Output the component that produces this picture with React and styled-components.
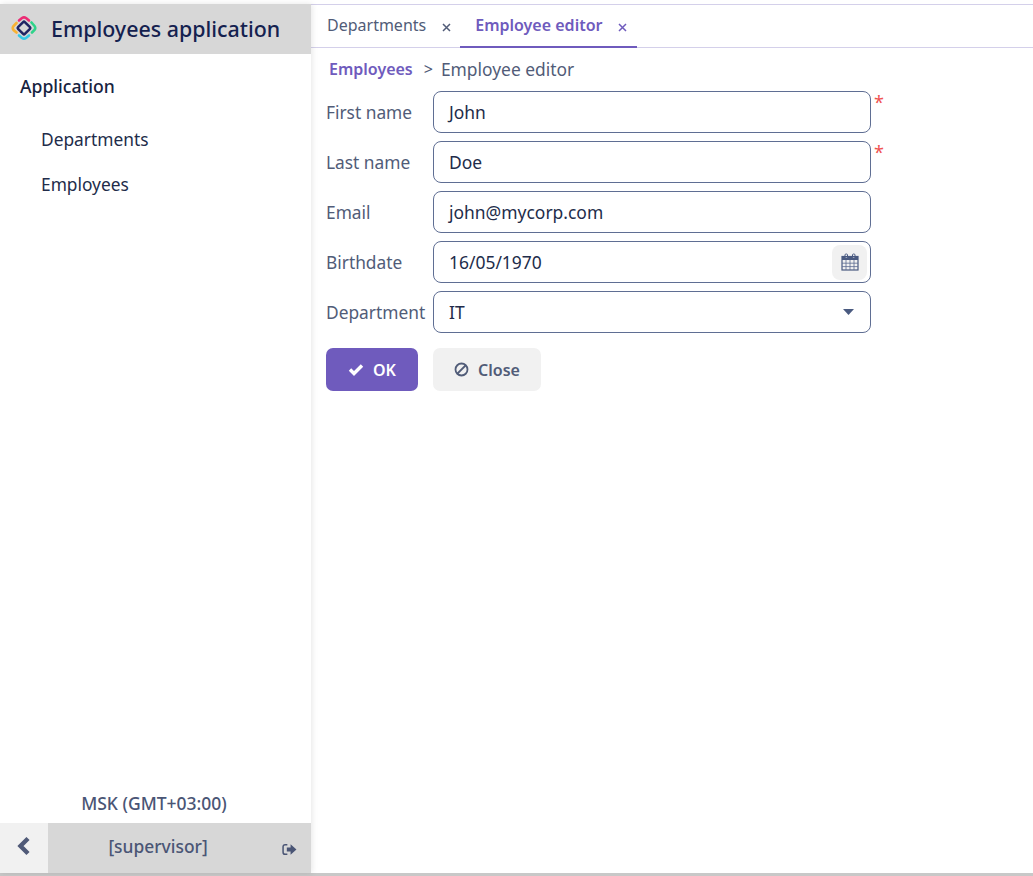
import React from "react"
import styled, { createGlobalStyle } from "styled-components"

const GlobalStyle = createGlobalStyle`
  html, body {
    margin: 0;
    padding: 0;
    background: #fff;
    font-family: "Noto Sans", sans-serif;
    overflow: hidden;
  }
`

const Page = styled.div`
  height: 876px;
  box-sizing: border-box;
  padding-top: 4px;
  display: flex;
  flex-direction: column;
`

const Frame = styled.div`
  flex: 1;
  display: flex;
  min-height: 0;
  border-bottom: 3px solid #c8c8c8;
`

const Sidebar = styled.aside`
  width: 311px;
  flex: none;
  display: flex;
  flex-direction: column;
  background: #fff;
  box-shadow: 1px 0 6px rgba(0, 0, 0, 0.1);
  z-index: 1;
`

const SideHeader = styled.div`
  height: 50px;
  box-sizing: border-box;
  padding: 0 0 2px 11px;
  background: #d7d7d7;
  display: flex;
  align-items: center;
  gap: 14px;
`

const AppTitle = styled.div`
  font-size: 21.4px;
  font-weight: 500;
  color: #14214f;
`

const MenuTitle = styled.div`
  margin: 19px 0 18px 20px;
  font-size: 17.6px;
  line-height: 26px;
  font-weight: 500;
  color: #17233f;
`

const MenuItem = styled.div`
  padding-left: 41px;
  height: 45px;
  line-height: 45px;
  font-size: 17.33px;
  color: #222c4a;
`

const Spacer = styled.div`
  flex: 1;
`

const Zone = styled.div`
  text-align: center;
  font-size: 17.5px;
  font-weight: 500;
  line-height: 24px;
  color: #4a5575;
  padding: 0 3px 8px 0;
`

const SideFooter = styled.div`
  display: flex;
  height: 50px;
`

const CollapseButton = styled.div`
  width: 48px;
  background: #f1f1f1;
  display: flex;
  align-items: flex-start;
  justify-content: center;
  padding-top: 13px;
  box-sizing: border-box;
`

const UserBar = styled.div`
  flex: 1;
  background: #d7d7d7;
  display: flex;
  align-items: flex-start;
`

const UserName = styled.div`
  flex: 1;
  text-align: center;
  font-size: 17.4px;
  font-weight: 500;
  line-height: 24px;
  padding-top: 11px;
  padding-right: 14px;
  color: #4a5575;
`

const LogoutIcon = styled.svg`
  margin: 20px 14px 0 0;
`

const Main = styled.main`
  flex: 1;
  min-width: 0;
  display: flex;
  flex-direction: column;
`

const TabBar = styled.div`
  height: 44px;
  box-sizing: border-box;
  display: flex;
  border-top: 1px solid #d4d0ea;
  border-bottom: 1px solid #d4d0ea;
  padding-left: 1px;
`

const Tab = styled.div`
  display: flex;
  align-items: flex-start;
  height: 43px;
  box-sizing: border-box;
  padding: 8px ${({ $active }) => ($active ? "10px" : "9px")} 0 15px;
  font-size: 16px;
  line-height: 24px;
  font-weight: ${({ $active }) => ($active ? 600 : 400)};
  color: ${({ $active }) => ($active ? "#6f5bbd" : "#515c78")};
  border-bottom: 2px solid ${({ $active }) => ($active ? "#6f5bbd" : "transparent")};
`

const TabClose = styled.svg`
  margin: 10px 0 0 16px;
`

const Content = styled.div`
  padding: 8px 15px 0 15px;
`

const Crumbs = styled.div`
  display: flex;
  align-items: center;
  height: 26px;
  padding-left: 3px;
  font-size: 17.4px;
  color: #515c78;
  margin-bottom: 9px;
`

const CrumbLink = styled.span`
  font-size: 16px;
  font-weight: 600;
  color: #6f5bbd;
`

const CrumbSep = styled.span`
  margin: 0 8px 0 11px;
  font-size: 16px;
`

const Row = styled.div`
  display: flex;
  align-items: center;
  height: 42px;
  margin-bottom: 8px;
`

const Label = styled.label`
  width: 107px;
  flex: none;
  font-size: 17.33px;
  color: #515c78;
`

const InputBox = styled.div`
  width: 438px;
  height: 42px;
  box-sizing: border-box;
  border: 1px solid #5f6e93;
  border-radius: 8px;
  display: flex;
  align-items: center;
  padding-left: 15px;
  font-size: 17.45px;
  color: #222c4a;
`

const Value = styled.span`
  flex: 1;
`

const Required = styled.span`
  align-self: flex-start;
  margin-left: 3px;
  color: #f0524f;
  font-size: 18px;
  line-height: 22px;
`

const DateButton = styled.div`
  width: 35px;
  height: 35px;
  margin-right: 3px;
  border-radius: 8px;
  background: #f1f1f1;
  display: flex;
  align-items: center;
  justify-content: center;
`

const Caret = styled.svg`
  margin-right: 16px;
`

const Buttons = styled.div`
  display: flex;
  margin-top: 15px;
  gap: 15px;
`

const Button = styled.div`
  height: 43px;
  width: ${({ $width }) => $width}px;
  box-sizing: border-box;
  border-radius: 7px;
  display: flex;
  align-items: center;
  justify-content: center;
  gap: 9px;
  font-size: 16px;
  font-weight: 600;
  background: ${({ $primary }) => ($primary ? "#6f5bbd" : "#f1f1f1")};
  color: ${({ $primary }) => ($primary ? "#fff" : "#515c78")};
`

const Logo = () => (
  <svg width="26" height="26" viewBox="0 0 26 26" fill="none" strokeWidth="2.6" strokeLinecap="round">
    <path d="M8 5.5 L11 3 Q13 1.6 15 3 L18 5.5" stroke="#ec2c74" />
    <path d="M20.5 7.5 L23.5 11 Q25 13 23.5 15 L21 17.5" stroke="#2fd38a" />
    <path d="M18 20.5 L15 23 Q13 24.4 11 23 L8 20.5" stroke="#32c9e6" />
    <path d="M5.5 17.5 L2.5 15 Q1 13 2.5 11 L5.5 8" stroke="#f9b233" />
    <rect x="8.2" y="8.2" width="9.6" height="9.6" rx="1.2" transform="rotate(45 13 13)" stroke="#1f2463" strokeWidth="2.5" />
  </svg>
)

const CloseX = () => (
  <TabClose width="9" height="9" viewBox="0 0 9 9">
    <path d="M1 1 L8 8 M8 1 L1 8" stroke="currentColor" strokeWidth="1.5" />
  </TabClose>
)

const Calendar = () => (
  <svg width="18" height="18" viewBox="0 0 18 18" fill="none">
    <path d="M1 3.5 H17 V7 H1 Z" fill="#4a5a80" />
    <rect x="4" y="1" width="2.5" height="4" rx="1" fill="#fff" stroke="#4a5a80" />
    <rect x="11.5" y="1" width="2.5" height="4" rx="1" fill="#fff" stroke="#4a5a80" />
    <rect x="1" y="3.5" width="16" height="13.5" stroke="#4a5a80" strokeWidth="1.2" />
    <path d="M1 10.2 H17 M1 13.6 H17 M5 7 V17 M9 7 V17 M13 7 V17" stroke="#5a6a90" strokeWidth="0.8" />
  </svg>
)

const fields = [
  { label: "First name", value: "John", required: true },
  { label: "Last name", value: "Doe", required: true },
  { label: "Email", value: "john@mycorp.com" },
]

export default function App() {
  return (
    <Page>
      <GlobalStyle />
      <Frame>
        <Sidebar>
          <SideHeader>
            <Logo />
            <AppTitle>Employees application</AppTitle>
          </SideHeader>
          <MenuTitle>Application</MenuTitle>
          <MenuItem>Departments</MenuItem>
          <MenuItem>Employees</MenuItem>
          <Spacer />
          <Zone>MSK (GMT+03:00)</Zone>
          <SideFooter>
            <CollapseButton>
              <svg width="14" height="20" viewBox="0 0 14 20">
                <path d="M11 2.5 L3.5 10 L11 17.5" fill="none" stroke="#505a78" strokeWidth="4.4" />
              </svg>
            </CollapseButton>
            <UserBar>
              <UserName>[supervisor]</UserName>
              <LogoutIcon width="15" height="13" viewBox="0 0 14 12">
                <path d="M5 1.5 H3 Q1 1.5 1 3.5 V8.5 Q1 10.5 3 10.5 H5" fill="none" stroke="#4a5575" strokeWidth="1.4" />
                <path d="M4.5 4.2 H8 V1.2 L13.5 6 L8 10.8 V7.8 H4.5 Z" fill="#4a5575" />
              </LogoutIcon>
            </UserBar>
          </SideFooter>
        </Sidebar>
        <Main>
          <TabBar>
            <Tab>
              Departments
              <CloseX />
            </Tab>
            <Tab $active>
              Employee editor
              <CloseX />
            </Tab>
          </TabBar>
          <Content>
            <Crumbs>
              <CrumbLink>Employees</CrumbLink>
              <CrumbSep>&gt;</CrumbSep>
              Employee editor
            </Crumbs>
            {fields.map(f => (
              <Row key={f.label}>
                <Label>{f.label}</Label>
                <InputBox>
                  <Value>{f.value}</Value>
                </InputBox>
                {f.required && <Required>*</Required>}
              </Row>
            ))}
            <Row>
              <Label>Birthdate</Label>
              <InputBox>
                <Value>16/05/1970</Value>
                <DateButton>
                  <Calendar />
                </DateButton>
              </InputBox>
            </Row>
            <Row>
              <Label>Department</Label>
              <InputBox>
                <Value>IT</Value>
                <Caret width="11" height="6" viewBox="0 0 11 6">
                  <path d="M0 0 H11 L5.5 6 Z" fill="#4a5a80" />
                </Caret>
              </InputBox>
            </Row>
            <Buttons>
              <Button $primary $width={92}>
                <svg width="16" height="13" viewBox="0 0 16 13">
                  <path d="M2 6.5 L6 10.5 L14 2.5" fill="none" stroke="#fff" strokeWidth="3.4" />
                </svg>
                OK
              </Button>
              <Button $width={108}>
                <svg width="15" height="15" viewBox="0 0 15 15" fill="none">
                  <circle cx="7.5" cy="7.5" r="6" stroke="#515c78" strokeWidth="1.8" />
                  <path d="M3.5 11.5 L11.5 3.5" stroke="#515c78" strokeWidth="1.8" />
                </svg>
                Close
              </Button>
            </Buttons>
          </Content>
        </Main>
      </Frame>
    </Page>
  )
}
